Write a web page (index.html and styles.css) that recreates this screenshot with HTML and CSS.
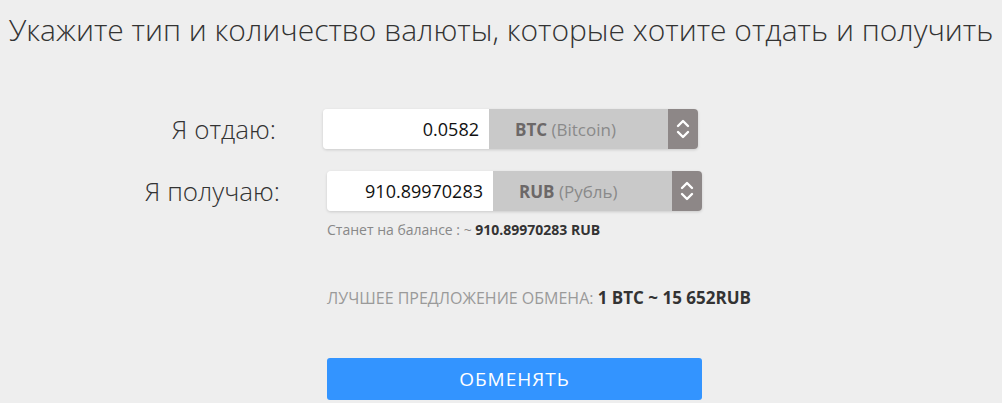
FILE: index.html
```html
<!DOCTYPE html>
<html lang="ru">
<head>
  <meta charset="utf-8">
  <title>Обмен валюты</title>
  <link rel="stylesheet" href="styles.css">
</head>
<body>
  <h1 class="title">Укажите тип и количество валюты, которые хотите отдать и получить</h1>

  <form class="exchange">
    <div class="row">
      <label class="row-label">Я отдаю:</label>
      <div class="field">
        <input class="amount" type="text" value="0.0582">
        <div class="currency"><b>BTC</b> (Bitcoin)</div>
        <div class="spin">
          <svg width="14" height="24" viewBox="0 0 14 24"><path d="M2 9 L7 4 L12 9 M2 15 L7 20 L12 15" fill="none" stroke="#fff" stroke-width="2.4" stroke-linecap="round" stroke-linejoin="round"/></svg>
        </div>
      </div>
    </div>

    <div class="row row-shift">
      <label class="row-label">Я получаю:</label>
      <div class="field">
        <input class="amount" type="text" value="910.89970283">
        <div class="currency"><b>RUB</b> (Рубль)</div>
        <div class="spin">
          <svg width="14" height="24" viewBox="0 0 14 24"><path d="M2 9 L7 4 L12 9 M2 15 L7 20 L12 15" fill="none" stroke="#fff" stroke-width="2.4" stroke-linecap="round" stroke-linejoin="round"/></svg>
        </div>
      </div>
    </div>

    <div class="below">
      <p class="balance">Станет на балансе : ~ <b>910.89970283 RUB</b></p>
      <p class="offer">Лучшее предложение обмена: <b>1 BTC ~ 15 652RUB</b></p>
      <button type="submit" class="submit">Обменять</button>
    </div>
  </form>
</body>
</html>
```

FILE: styles.css
```css
* {
  box-sizing: border-box;
}

body {
  margin: 0;
  background-color: #eeeeee;
  font-family: "Open Sans", Arial, sans-serif;
  color: #444;
}

.title {
  margin: 0;
  padding-top: 12px;
  font-size: 30px;
  font-weight: 300;
  line-height: 36px;
  text-align: center;
  color: #333;
}

.exchange {
  margin-top: 61px;
}

.row {
  display: flex;
  align-items: center;
  margin-bottom: 22px;
}

.row-shift {
  margin-left: 4px;
}

.row-label {
  width: 276px;
  margin-right: 47px;
  text-align: right;
  font-size: 26px;
  font-weight: 300;
  color: #333;
}

.field {
  display: flex;
  width: 375px;
  height: 40px;
  border-radius: 4px;
  overflow: hidden;
  box-shadow: 0 1px 3px rgba(0, 0, 0, 0.15);
}

.amount {
  width: 166px;
  border: none;
  padding: 0 10px 0 8px;
  text-align: right;
  font-family: inherit;
  font-size: 18px;
  color: #111;
  background-color: #fff;
  outline: none;
}

.currency {
  flex: 1;
  display: flex;
  align-items: center;
  padding-left: 26px;
  background-color: #c9c9c9;
  font-size: 17px;
  color: #8a8a8a;
  white-space: pre;
}

.currency b {
  color: #6c6868;
}

.spin {
  width: 30px;
  display: flex;
  align-items: center;
  justify-content: center;
  background-color: #8d8787;
}

.below {
  margin-left: 327px;
}

.balance {
  margin: -13px 0 0;
  font-size: 14px;
  color: #888;
}

.balance b {
  color: #333;
}

.offer {
  margin: 47px 0 0;
  font-size: 16px;
  line-height: 24px;
  text-transform: uppercase;
  color: #9a9a9a;
}

.offer b {
  font-size: 17px;
  color: #333;
}

.submit {
  margin-top: 48px;
  width: 375px;
  height: 42px;
  border: none;
  border-radius: 3px;
  background-color: #3394ff;
  color: #fff;
  font-family: inherit;
  font-size: 19px;
  letter-spacing: 1px;
  text-transform: uppercase;
  cursor: pointer;
}
```
